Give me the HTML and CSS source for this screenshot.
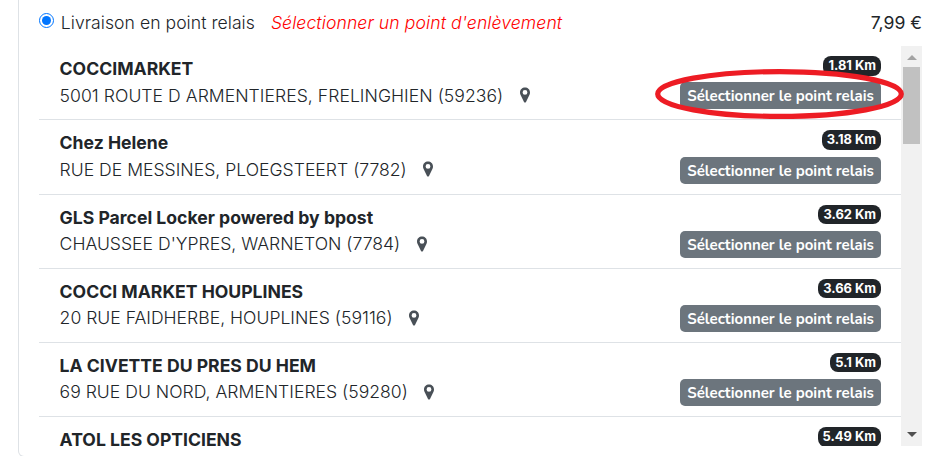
FILE: index.html
```html
<!DOCTYPE html>
<html lang="fr">
<head>
  <meta charset="UTF-8">
  <title>Livraison en point relais</title>
  <link rel="stylesheet" href="styles.css">
</head>
<body>

  <svg class="sprite" aria-hidden="true">
    <symbol id="pin" viewBox="0 0 10 16">
      <path fill-rule="evenodd" d="M5 .5C2.200.5 0 2.600 0 5.400c0 .9.200 1.600.5 2.300L4 14.900c.4.800 1.600.8 2 0L9.500 7.700c.3-.7.5-1.400.5-2.300C10 2.600 7.800.5 5 .5zM5 3a2.400 2.400 0 1 1 0 4.800A2.400 2.400 0 0 1 5 3z"/>
    </symbol>
  </svg>

  <section class="delivery">
    <header class="delivery-header">
      <label class="option">
        <span class="radio"></span>
        <span class="option-label">Livraison en point relais</span>
        <em class="option-hint">Sélectionner un point d'enlèvement</em>
      </label>
      <span class="price">7,99 €</span>
    </header>

    <div class="relay-box">
      <ul class="relay-list">
        <li class="relay">
          <div class="relay-info">
            <strong>COCCIMARKET</strong>
            <p><span>5001 ROUTE D ARMENTIERES, FRELINGHIEN (59236)</span><svg class="pin"><use href="#pin"/></svg></p>
          </div>
          <div class="relay-action">
            <span class="badge">1.81 Km</span>
            <button>Sélectionner le point relais</button>
          </div>
        </li>
        <li class="relay">
          <div class="relay-info">
            <strong>Chez Helene</strong>
            <p><span>RUE DE MESSINES, PLOEGSTEERT (7782)</span><svg class="pin"><use href="#pin"/></svg></p>
          </div>
          <div class="relay-action">
            <span class="badge">3.18 Km</span>
            <button>Sélectionner le point relais</button>
          </div>
        </li>
        <li class="relay">
          <div class="relay-info">
            <strong>GLS Parcel Locker powered by bpost</strong>
            <p><span>CHAUSSEE D'YPRES, WARNETON (7784)</span><svg class="pin"><use href="#pin"/></svg></p>
          </div>
          <div class="relay-action">
            <span class="badge">3.62 Km</span>
            <button>Sélectionner le point relais</button>
          </div>
        </li>
        <li class="relay">
          <div class="relay-info">
            <strong>COCCI MARKET HOUPLINES</strong>
            <p><span>20 RUE FAIDHERBE, HOUPLINES (59116)</span><svg class="pin"><use href="#pin"/></svg></p>
          </div>
          <div class="relay-action">
            <span class="badge">3.66 Km</span>
            <button>Sélectionner le point relais</button>
          </div>
        </li>
        <li class="relay">
          <div class="relay-info">
            <strong>LA CIVETTE DU PRES DU HEM</strong>
            <p><span>69 RUE DU NORD, ARMENTIERES (59280)</span><svg class="pin"><use href="#pin"/></svg></p>
          </div>
          <div class="relay-action">
            <span class="badge">5.1 Km</span>
            <button>Sélectionner le point relais</button>
          </div>
        </li>
        <li class="relay">
          <div class="relay-info">
            <strong>ATOL LES OPTICIENS</strong>
          </div>
          <div class="relay-action">
            <span class="badge">5.49 Km</span>
          </div>
        </li>
      </ul>
      <div class="scrollbar">
        <span class="arrow-up"></span>
        <span class="thumb"></span>
        <span class="arrow-down"></span>
      </div>
    </div>

    <svg class="highlight" viewBox="0 0 250 51">
      <ellipse cx="124.500" cy="26" rx="121.800" ry="22.400"/>
    </svg>
  </section>

</body>
</html>
```
FILE: styles.css
```css
:root {
  --text-color: #212529;
  --border-color: #dee2e6;
  --button-color: #6c757d;
}
* {
  box-sizing: border-box;
}
body {
  margin: 0;
  height: 456px;
  overflow: hidden;
  background-color: #fff;
  color: var(--text-color);
  font-family: Inter, sans-serif;
  font-size: 17.6px;
  font-weight: 300;
  line-height: 26.4px;
}
.sprite {
  display: none;
}

/* Mode de livraison */
.delivery {
  position: relative;
  width: 930px;
  height: 457px;
  margin-left: 18px;
  padding: 10px 25px 0 20px;
  border: 1px solid var(--border-color);
  border-top: none;
  border-radius: 0 0 6px 6px;
}
.delivery-header {
  display: flex;
  justify-content: space-between;
  height: 36px;
}
.option {
  display: flex;
}
.radio {
  width: 15px;
  height: 15px;
  margin: 3px 6.4px 0 0.4px;
  border: 1.5px solid #0075ff;
  border-radius: 50%;
  padding: 2px;
  background: #0075ff content-box;
}
.option-label {
  letter-spacing: 0.04px;
}
.option-hint {
  margin-left: 16px;
  color: #f00;
  letter-spacing: 0.09px;
}
.price {
  font-weight: 400;
}

/* Liste des points relais */
.relay-box {
  display: flex;
  width: 883px;
  height: 400px;
  overflow: hidden;
}
.relay-list {
  flex: 1;
  margin: 0;
  padding: 0.2px 0 0;
  list-style: none;
}
.relay {
  display: flex;
  justify-content: space-between;
  height: 74.2px;
  padding: 10px 20px 0 20.6px;
  border-bottom: 1px solid var(--border-color);
}
.relay:first-child p {
  letter-spacing: 0.035px;
}
.relay strong {
  font-weight: 700;
}
.relay p {
  display: flex;
  align-items: center;
  margin: 0;
}
.pin {
  width: 10px;
  height: 16px;
  margin: -1px 0 0 16.5px;
  fill: #495057;
}
.relay-action {
  display: flex;
  flex-direction: column;
  align-items: flex-end;
}
.badge {
  height: 19.4px;
  padding: 0 5px;
  border-radius: 8px;
  background-color: var(--text-color);
  color: #fff;
  font-size: 12.9px;
  font-weight: 700;
  line-height: 19.4px;
}
.relay button {
  width: 201px;
  height: 27px;
  margin-top: 7px;
  padding: 1px 0 0;
  border: none;
  border-radius: 5px;
  background-color: var(--button-color);
  color: #fff;
  font-family: Nunito, "Open Sans", sans-serif;
  font-size: 15px;
  font-weight: 700;
  white-space: nowrap;
}
.relay:first-child button {
  margin-top: 6.4px;
}

/* Barre de défilement */
.scrollbar {
  display: flex;
  flex-direction: column;
  align-items: center;
  width: 21px;
  background-color: #f1f1f1;
}
.arrow-up,
.arrow-down {
  border: 5px solid transparent;
}
.arrow-up {
  margin-top: 9px;
  border-top: none;
  border-bottom-color: #a3a3a3;
}
.thumb {
  width: 17px;
  height: 77px;
  margin-top: 7px;
  background-color: #c1c1c1;
}
.arrow-down {
  margin: auto 0 9px;
  border-bottom: none;
  border-top-color: #505050;
}

/* Repère autour du bouton */
.highlight {
  position: absolute;
  top: 68px;
  left: 636px;
  width: 250px;
  height: 51px;
  fill: none;
  stroke: #ed1c24;
  stroke-width: 5.2;
  pointer-events: none;
}
```
